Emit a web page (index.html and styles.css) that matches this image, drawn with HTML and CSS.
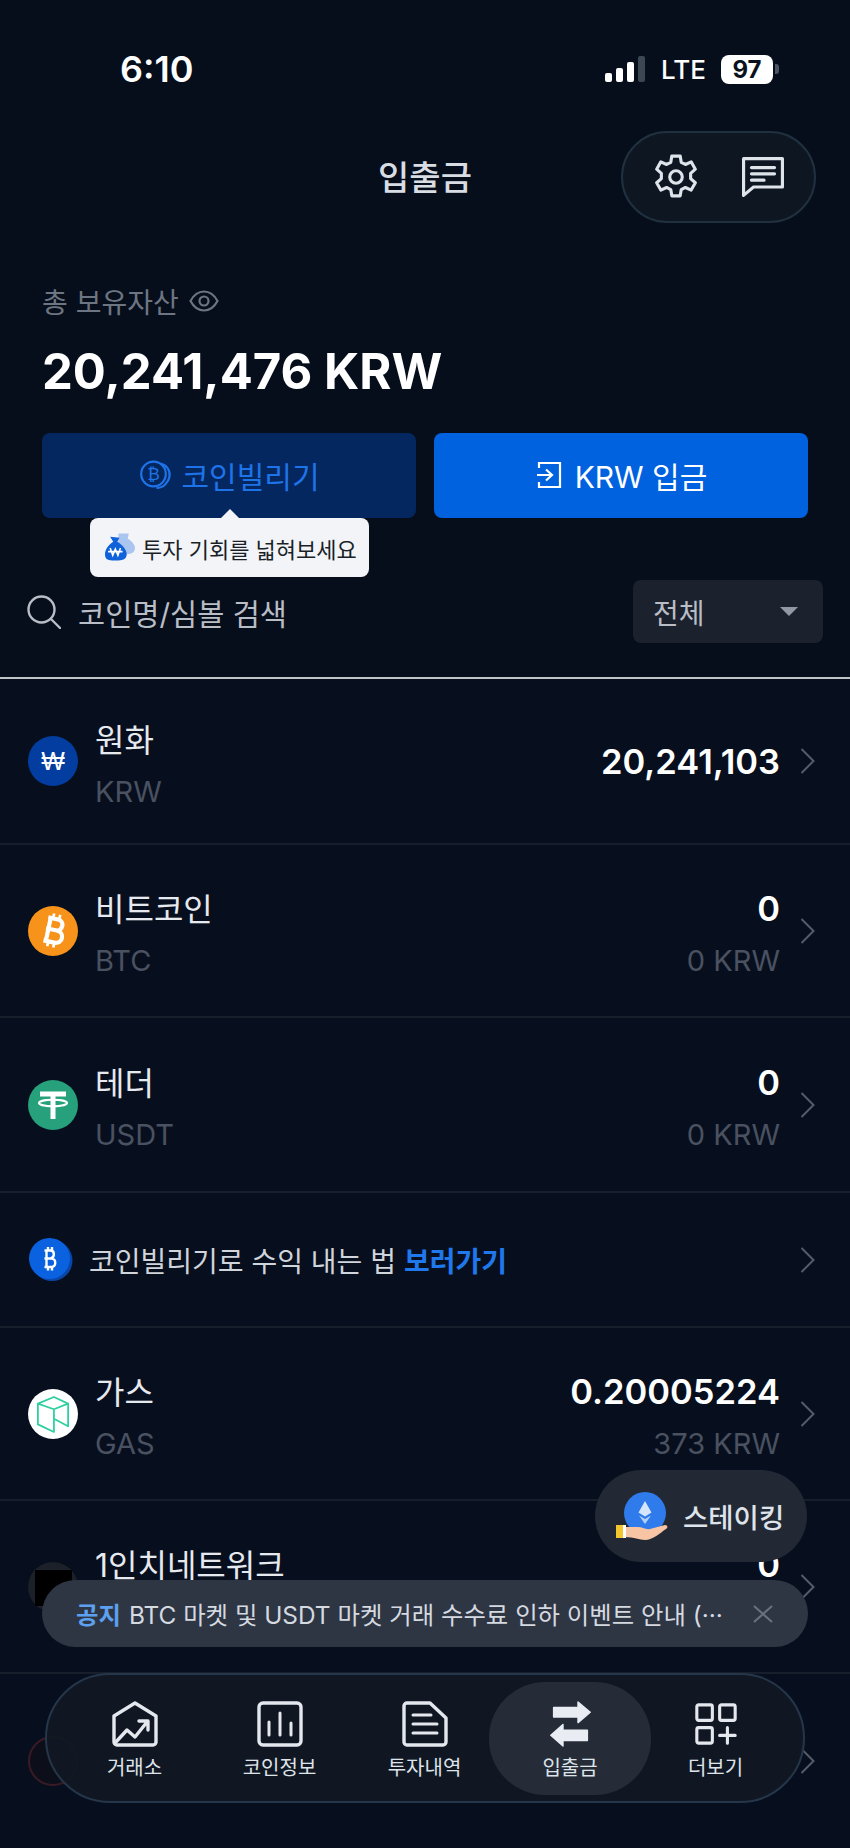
FILE: index.html
```html
<!DOCTYPE html>
<html lang="ko">
<head>
    <meta charset="UTF-8">
    <meta name="viewport" content="width=device-width, initial-scale=1.0">
    <title>입출금</title>
    <link rel="stylesheet" href="styles.css">
</head>
<body>
<div class="screen">
    <div class="top">
        <div class="status">
            <span class="time">6:10</span>
            <div class="status-right">
                <div class="signal"><i class="b1"></i><i class="b2"></i><i class="b3"></i><i class="b4"></i></div>
                <span class="lte">LTE</span>
                <span class="battery">97</span>
                <span class="nub"></span>
            </div>
        </div>

        <div class="header">
            <h1>입출금</h1>
            <div class="head-pill">
                <svg class="gear" viewBox="0 0 42 44" fill="none" stroke="#dfe3ea" stroke-width="3" stroke-linejoin="round">
                    <path d="M17 2h8l1 6 4 2 5.500-2.500 4 7-4.500 4v5l4.500 4-4 7-5.500-2.500-4 2-1 6h-8l-1-6-4-2-5.500 2.500-4-7 4.500-4v-5l-4.500-4 4-7L12 10l4-2z"/>
                    <circle cx="21" cy="22" r="6"/>
                </svg>
                <svg class="chat" viewBox="0 0 40 38" fill="none" stroke="#dfe3ea" stroke-width="3" stroke-linejoin="round" stroke-linecap="round">
                    <path d="M1.500 1.500h37v27H11L1.500 36.500z"/>
                    <path d="M9 10h22M9 16h22M9 22h12"/>
                </svg>
            </div>
        </div>

        <div class="total">
            <div class="total-label">
                <span>총 보유자산</span>
                <svg class="eye" viewBox="0 0 30 22" fill="none" stroke="#6e7582" stroke-width="2.200">
                    <path d="M1.500 11C5 4.500 10 1.500 15 1.500S25 4.500 28.500 11C25 17.500 20 20.500 15 20.500S5 17.500 1.500 11z"/>
                    <circle cx="15" cy="11" r="4.500"/>
                </svg>
            </div>
            <div class="total-value">20,241,476 KRW</div>
        </div>

        <div class="actions">
            <div class="btn btn-dark">
                <svg class="btn-icon" viewBox="0 0 32 30" fill="none" stroke="#1f73e8" stroke-width="2.200">
                    <circle cx="13.500" cy="14" r="12.300"/>
                    <path d="M21 3.500c6 2 9.500 7 8.500 13-1 6-6 11.500-13 11.500"/>
                    <text x="13.500" y="20" text-anchor="middle" class="btn-b">₿</text>
                </svg>
                코인빌리기
                <div class="tip">
                    <svg class="bag" viewBox="0 0 30 30">
                        <path d="M13 1h10l-1 5c4 2 7 6 7 9 0 4-3 6-8 6h-8z" fill="#a9c5f0"/>
                        <path d="M5 4l9 1-2 4c5 3 9 8 9 12 0 4-3 6-8 6H7c-5 0-7-2-7-6 0-4 3-9 8-12z" fill="#0f62d9"/>
                        <path d="M3 18.500h14M5 15l2.500 7 2.500-6 2.500 6 2.500-7" fill="none" stroke="#fff" stroke-width="1.500"/>
                    </svg>
                    <span>투자 기회를 넓혀보세요</span>
                </div>
            </div>
            <div class="btn btn-blue">
                <svg class="btn-icon-in" viewBox="0 0 26 28" fill="none" stroke="#fff" stroke-width="2.200">
                    <path d="M3 7V2h21v24H3v-5"/>
                    <path d="M1 14h14M10 8.500l6 5.500-6 5.500"/>
                </svg>
                KRW 입금
            </div>
        </div>

        <div class="filter">
            <div class="search">
                <svg class="search-icon" viewBox="0 0 34 34" fill="none" stroke="#b8bdc6" stroke-width="2.400" stroke-linecap="round">
                    <circle cx="14.500" cy="14.500" r="13"/>
                    <path d="M24 24l9 9"/>
                </svg>
                <span>코인명/심볼 검색</span>
            </div>
            <div class="select">
                <span>전체</span>
                <i class="caret"></i>
            </div>
        </div>
    </div>

    <div class="list">
        <div class="row row-first">
            <div class="coin coin-krw">₩</div>
            <div class="names"><div class="name">원화</div><div class="sym">KRW</div></div>
            <div class="nums"><div class="qty">20,241,103</div></div>
            <svg class="chev" viewBox="0 0 15 26"><path d="M1.500 1l12 12-12 12"/></svg>
        </div>
        <div class="row">
            <div class="coin coin-btc">
                <svg viewBox="0 0 24 34" width="30" height="42"><g transform="rotate(12 12 17)" fill="none" stroke="#fff" stroke-width="3.400"><path d="M6 7h8c6 0 6 9 0 9H6h9c7 0 7 10 0 10H6M8 7v19"/><path d="M10 3v4M15 3v4M10 26v4M15 26v4" stroke-width="2.200"/></g></svg>
            </div>
            <div class="names"><div class="name">비트코인</div><div class="sym">BTC</div></div>
            <div class="nums"><div class="qty">0</div><div class="krw">0 KRW</div></div>
            <svg class="chev" viewBox="0 0 15 26"><path d="M1.500 1l12 12-12 12"/></svg>
        </div>
        <div class="row row-tall">
            <div class="coin coin-usdt">
                <svg viewBox="0 0 34 30" width="34" height="30" fill="none" stroke="#fff"><path d="M4 4h26M17 4v25" stroke-width="5"/><ellipse cx="17" cy="13" rx="14" ry="3.200" stroke-width="2"/></svg>
            </div>
            <div class="names"><div class="name">테더</div><div class="sym">USDT</div></div>
            <div class="nums"><div class="qty">0</div><div class="krw">0 KRW</div></div>
            <svg class="chev" viewBox="0 0 15 26"><path d="M1.500 1l12 12-12 12"/></svg>
        </div>
        <div class="row row-promo">
            <svg class="promo-icon" viewBox="0 0 44 43">
                <circle cx="23" cy="22.500" r="20.500" fill="#0a46a8"/>
                <circle cx="20.500" cy="20.500" r="20.500" fill="#0a62e0"/>
                <path d="M15.500 12.500h6c4.500 0 4.500 7.500 0 8h-6 7c5 0 5 8.500 0 8.500h-7M17.500 12.500V29M19 9v3.500M23 9v3.500M19 29v3.500M23 29v3.500" fill="none" stroke="#fff" stroke-width="2.400"/>
            </svg>
            <div class="promo-text">코인빌리기로 수익 내는 법 <b>보러가기</b></div>
            <svg class="chev" viewBox="0 0 15 26"><path d="M1.500 1l12 12-12 12"/></svg>
        </div>
        <div class="row">
            <div class="coin coin-gas">
                <svg viewBox="0 0 36 40" width="34" height="38" fill="none" stroke="#2fd0a0" stroke-width="1.900" stroke-linejoin="round">
                    <path d="M2 9L19 2l15 7v24l-15-8V15zM2 9v22l17 8V25M19 15l15-6"/>
                </svg>
            </div>
            <div class="names"><div class="name">가스</div><div class="sym">GAS</div></div>
            <div class="nums"><div class="qty">0.20005224</div><div class="krw">373 KRW</div></div>
            <svg class="chev" viewBox="0 0 15 26"><path d="M1.500 1l12 12-12 12"/></svg>
        </div>
        <div class="row">
            <div class="coin coin-inch"><i class="inch-mark"></i></div>
            <div class="names"><div class="name">1인치네트워크</div><div class="sym">&nbsp;</div></div>
            <div class="nums"><div class="qty">0</div><div class="krw">&nbsp;</div></div>
            <svg class="chev" viewBox="0 0 15 26"><path d="M1.500 1l12 12-12 12"/></svg>
        </div>
        <div class="row row-last">
            <div class="coin coin-red"></div>
            <div class="names"></div>
            <div class="nums"></div>
            <svg class="chev" viewBox="0 0 15 26"><path d="M1.500 1l12 12-12 12"/></svg>
        </div>
    </div>

    <!-- floating stuff over the list -->
    <div class="staking">
        <svg class="stake-icon" viewBox="0 0 52 50">
            <circle cx="29" cy="22" r="21" fill="#2f7bec"/>
            <path d="M29 10l6.500 11.500-6.500 4-6.500-4z" fill="#d5e5fb"/>
            <path d="M29 28l6-3.500-6 8.500-6-8.500z" fill="#b4d0f6"/>
            <path d="M8 36h14c4 0 8 3 12 2l15-4c3 0 3 3 1 4-6 4-13 11-21 11-6 0-10-3-21-3z" fill="#f7c5a3"/>
            <rect x="0" y="34" width="10" height="13" fill="#f3c52e"/>
            <rect x="7" y="34" width="3" height="13" fill="#fff"/>
        </svg>
        <span>스테이킹</span>
    </div>

    <div class="notice">
        <b>공지</b>
        <span class="notice-text">BTC 마켓 및 USDT 마켓 거래 수수료 인하 이벤트 안내 (···</span>
        <svg class="notice-x" viewBox="0 0 20 18" fill="none" stroke="#6a7280" stroke-width="2"><path d="M1 1l18 16M19 1L1 17"/></svg>
    </div>

    <div class="tabbar">
        <div class="tab">
            <svg viewBox="0 0 46 46" fill="none" stroke="#e4e8ee" stroke-width="3.400" stroke-linejoin="round" stroke-linecap="round">
                <path d="M2 15L23 2l21 13v26a3 3 0 0 1-3 3H5a3 3 0 0 1-3-3z"/>
                <path d="M3 42l12-13 8 7 12-15M27 20h9v9"/>
            </svg>
            <span>거래소</span>
        </div>
        <div class="tab">
            <svg viewBox="0 0 46 46" fill="none" stroke="#e4e8ee" stroke-width="3.400" stroke-linejoin="round" stroke-linecap="round">
                <rect x="2" y="2" width="42" height="42" rx="4"/>
                <path d="M12 21v13M23 12v22M34 22v12" stroke-width="3"/>
            </svg>
            <span>코인정보</span>
        </div>
        <div class="tab">
            <svg viewBox="0 0 46 46" fill="none" stroke="#e4e8ee" stroke-width="3.400" stroke-linejoin="round" stroke-linecap="round">
                <path d="M5 2h23l16 15v24a3 3 0 0 1-3 3H5a3 3 0 0 1-3-3V5a3 3 0 0 1 3-3z"/>
                <path d="M11 14h18M11 23h24M11 32h24" stroke-width="3"/>
            </svg>
            <span>투자내역</span>
        </div>
        <div class="tab tab-on">
            <svg viewBox="0 0 44 49" fill="#e9edf3" stroke="#e9edf3" stroke-width="1.500" stroke-linejoin="round">
                <path d="M4 7h26V1l13 11-13 11v-6H4z"/>
                <path d="M40 31H14v-6L1 36.500 14 48v-6h26z"/>
            </svg>
            <span>입출금</span>
        </div>
        <div class="tab tab-more">
            <svg viewBox="0 0 46 46" fill="none" stroke="#e4e8ee" stroke-width="3.400" stroke-linejoin="round" stroke-linecap="round">
                <rect x="2" y="2" width="17" height="17" rx="2"/>
                <rect x="27" y="2" width="17" height="17" rx="2"/>
                <rect x="2" y="27" width="17" height="17" rx="2"/>
                <path d="M35.500 27v17M27 35.500h17"/>
            </svg>
            <span>더보기</span>
        </div>
    </div>
</div>
</body>
</html>
```

FILE: styles.css
```css
/* 기본 */
* {
    box-sizing: border-box;
}

body {
    margin: 0;
    background-color: #060e1b;
    font-family: Inter, "Noto Sans CJK KR", sans-serif;
    color: #dfe3ea;
}

.screen {
    position: relative;
    width: 850px;
    height: 1848px;
    overflow: hidden;
    background-color: #060e1b;
}

/* 상단 상태바 */
.top {
    height: 679px;
    border-bottom: 2px solid #c0c4c9;
    padding-top: 44px;
}

.status {
    display: flex;
    justify-content: space-between;
    align-items: center;
    height: 50px;
    padding-left: 120px;
    padding-right: 71px;
}

.time {
    font-size: 36px;
    font-weight: 600;
    color: #fff;
}

.status-right {
    display: flex;
    align-items: center;
}

.signal {
    display: flex;
    align-items: flex-end;
    gap: 4px;
    height: 26px;
    margin-right: 16px;
}

.signal i {
    display: block;
    width: 7px;
    border-radius: 2px;
    background-color: #fff;
}

.signal .b1 { height: 9px; }
.signal .b2 { height: 14px; }
.signal .b3 { height: 20px; }
.signal .b4 { height: 26px; background-color: #3d4653; }

.lte {
    font-size: 26px;
    font-weight: 500;
    color: #fff;
    margin-right: 15px;
}

.battery {
    display: flex;
    justify-content: center;
    align-items: center;
    width: 52px;
    height: 29px;
    border-radius: 8px;
    background-color: #fff;
    color: #0a1220;
    font-size: 24px;
    font-weight: 700;
}

.nub {
    width: 4px;
    height: 10px;
    margin-left: 2px;
    border-radius: 0 3px 3px 0;
    background-color: #4c5563;
}

/* 헤더 */
.header {
    position: relative;
    display: flex;
    justify-content: flex-end;
    height: 92px;
    margin-top: 37px;
    padding-right: 34px;
}

.header h1 {
    position: absolute;
    left: 0;
    right: 0;
    top: 24px;
    margin: 0;
    text-align: center;
    font-size: 34px;
    font-weight: 500;
    line-height: 46px;
    color: #d8dce3;
}

.head-pill {
    display: flex;
    align-items: center;
    gap: 44px;
    width: 195px;
    height: 92px;
    padding-left: 31px;
    border: 2px solid #20303f;
    border-radius: 46px;
    background-color: #0e1622;
}

.gear {
    width: 44px;
    height: 46px;
}

.chat {
    width: 42px;
    height: 40px;
}

/* 총 보유자산 */
.total {
    margin-top: 58px;
    padding-left: 42px;
}

.total-label {
    display: flex;
    align-items: center;
    gap: 10px;
    height: 40px;
    font-size: 28px;
    color: #6e7582;
}

.eye {
    width: 30px;
    height: 22px;
}

.total-value {
    margin-top: 22px;
    font-size: 49px;
    font-weight: 700;
    line-height: 58px;
    color: #fff;
}

/* 버튼 */
.actions {
    display: flex;
    gap: 18px;
    margin-top: 32px;
    padding: 0 42px;
}

.btn {
    position: relative;
    display: flex;
    justify-content: center;
    align-items: center;
    gap: 10px;
    width: 374px;
    height: 85px;
    padding-bottom: 2px;
    border-radius: 8px;
    font-size: 30px;
}

.btn-dark {
    padding-left: 1px;
    background-color: #04275f;
    color: #1f73e8;
}

.btn-blue {
    background-color: #0062df;
    color: #fff;
}

.btn-icon {
    width: 32px;
    height: 30px;
}

.btn-b {
    font-size: 17px;
    fill: #1f73e8;
    stroke: none;
    font-family: "DejaVu Sans", sans-serif;
}

.btn-icon-in {
    width: 26px;
    height: 28px;
    margin-left: 1px;
    margin-right: 3px;
}

/* 말풍선 */
.tip {
    position: absolute;
    left: 48px;
    top: 85px;
    display: flex;
    align-items: center;
    gap: 6px;
    width: 279px;
    height: 59px;
    padding-left: 15px;
    border-radius: 8px;
    background-color: #f2f4f8;
    color: #1b1f27;
    font-size: 22px;
}

.tip::before {
    content: "";
    position: absolute;
    left: 131px;
    top: -9px;
    border-left: 9px solid transparent;
    border-right: 9px solid transparent;
    border-bottom: 9px solid #f2f4f8;
}

.bag {
    width: 31px;
    height: 32px;
}

/* 검색 */
.filter {
    display: flex;
    justify-content: space-between;
    align-items: center;
    margin-top: 62px;
    padding-left: 27px;
    padding-right: 27px;
}

.search {
    display: flex;
    align-items: center;
    gap: 17px;
    font-size: 29.500px;
    color: #b8bdc6;
}

.search-icon {
    width: 34px;
    height: 34px;
}

.select {
    display: flex;
    justify-content: space-between;
    align-items: center;
    width: 190px;
    height: 63px;
    padding: 0 25px 0 20px;
    border-radius: 8px;
    background-color: #1c222d;
    font-size: 28px;
    color: #b8bdc6;
}

.caret {
    border-left: 9px solid transparent;
    border-right: 9px solid transparent;
    border-top: 9px solid #9299a5;
}

/* 리스트 */
.list {
    background-color: #070f1e;
}

.row {
    display: flex;
    align-items: center;
    height: 173px;
    padding-left: 28px;
    padding-right: 35px;
    border-bottom: 2px solid #171e2c;
}

.row-first {
    height: 166px;
}

.row-tall {
    height: 175px;
}

.row-promo {
    height: 135px;
    padding-left: 29px;
}

.row-last {
    border-bottom: 0;
}

.coin {
    display: flex;
    justify-content: center;
    align-items: center;
    flex: none;
    width: 50px;
    height: 50px;
    border-radius: 50%;
}

.coin-krw {
    background-color: #033da0;
    color: #fff;
    font-family: "Liberation Sans", sans-serif;
    font-size: 25px;
}

.coin-btc {
    background-color: #f7931a;
}

.coin-usdt {
    background-color: #26a17b;
}

.coin-gas {
    background-color: #fff;
}

.coin-inch {
    position: relative;
    background-color: #1b2029;
}

.inch-mark {
    position: absolute;
    left: 7px;
    top: 8px;
    width: 37px;
    height: 36px;
    background-color: #000;
}

.coin-red {
    border: 2px solid #3a1a24;
    background-color: #0c0f1a;
}

.names {
    flex: 1;
    margin-left: 17px;
    padding-top: 8px;
}

.name {
    font-size: 32px;
    line-height: 44px;
    color: #e6e9ee;
}

.sym {
    margin-top: 9px;
    font-size: 29px;
    line-height: 40px;
    color: #4a5160;
}

.nums {
    padding-top: 6px;
    text-align: right;
}

.row-first .nums {
    padding-top: 2px;
}

.qty {
    font-size: 34.500px;
    font-weight: 600;
    line-height: 44px;
    color: #fff;
}

.krw {
    margin-top: 10px;
    font-size: 29px;
    line-height: 40px;
    color: #4a5160;
}

.chev {
    flex: none;
    width: 15px;
    height: 26px;
    margin-left: 20px;
    fill: none;
    stroke: #555c69;
    stroke-width: 2;
}

.promo-icon {
    flex: none;
    width: 44px;
    height: 43px;
}

.promo-text {
    flex: 1;
    margin-left: 16px;
    font-size: 28px;
    color: #d0d4db;
}

.promo-text b {
    font-weight: 600;
    color: #1f78ec;
}

/* 떠있는 요소들 */
.staking {
    position: absolute;
    left: 595px;
    top: 1470px;
    display: flex;
    align-items: center;
    gap: 15px;
    width: 212px;
    height: 92px;
    padding-left: 21px;
    border-radius: 46px;
    background-color: #222935;
    font-size: 27.500px;
    font-weight: 500;
}

.stake-icon {
    width: 52px;
    height: 50px;
}

.notice {
    position: absolute;
    left: 42px;
    top: 1580px;
    display: flex;
    align-items: center;
    width: 766px;
    height: 67px;
    padding-left: 34px;
    border-radius: 34px;
    background-color: #2e3644;
    font-size: 24.400px;
}

.notice b {
    margin-right: 8px;
    color: #5da0f0;
    font-weight: 700;
}

.notice-text {
    flex: 1;
    white-space: nowrap;
    color: #d5d9e0;
}

.notice-x {
    width: 20px;
    height: 18px;
    margin-right: 35px;
}

.tabbar {
    position: absolute;
    left: 45px;
    top: 1673px;
    display: flex;
    width: 760px;
    height: 130px;
    padding: 7px 15px 0;
    border: 2px solid #26364a;
    border-radius: 65px;
    background-color: rgba(17, 24, 35, 0.95);
}

.tab {
    position: relative;
    display: flex;
    flex-direction: column;
    align-items: center;
    flex: none;
    width: 145px;
    height: 113px;
    padding-top: 19px;
    border-radius: 56px;
    font-size: 20px;
    color: #dfe3ea;
}

.tab svg {
    width: 46px;
    height: 46px;
    margin-bottom: 5px;
}

.tab-on {
    width: 162px;
    margin: 0 -8px;
    background-color: #252c38;
}

.tab-on svg {
    width: 43px;
}

.tab-more svg {
    width: 42px;
    height: 42px;
    margin-top: 2px;
    margin-bottom: 7px;
}
```
